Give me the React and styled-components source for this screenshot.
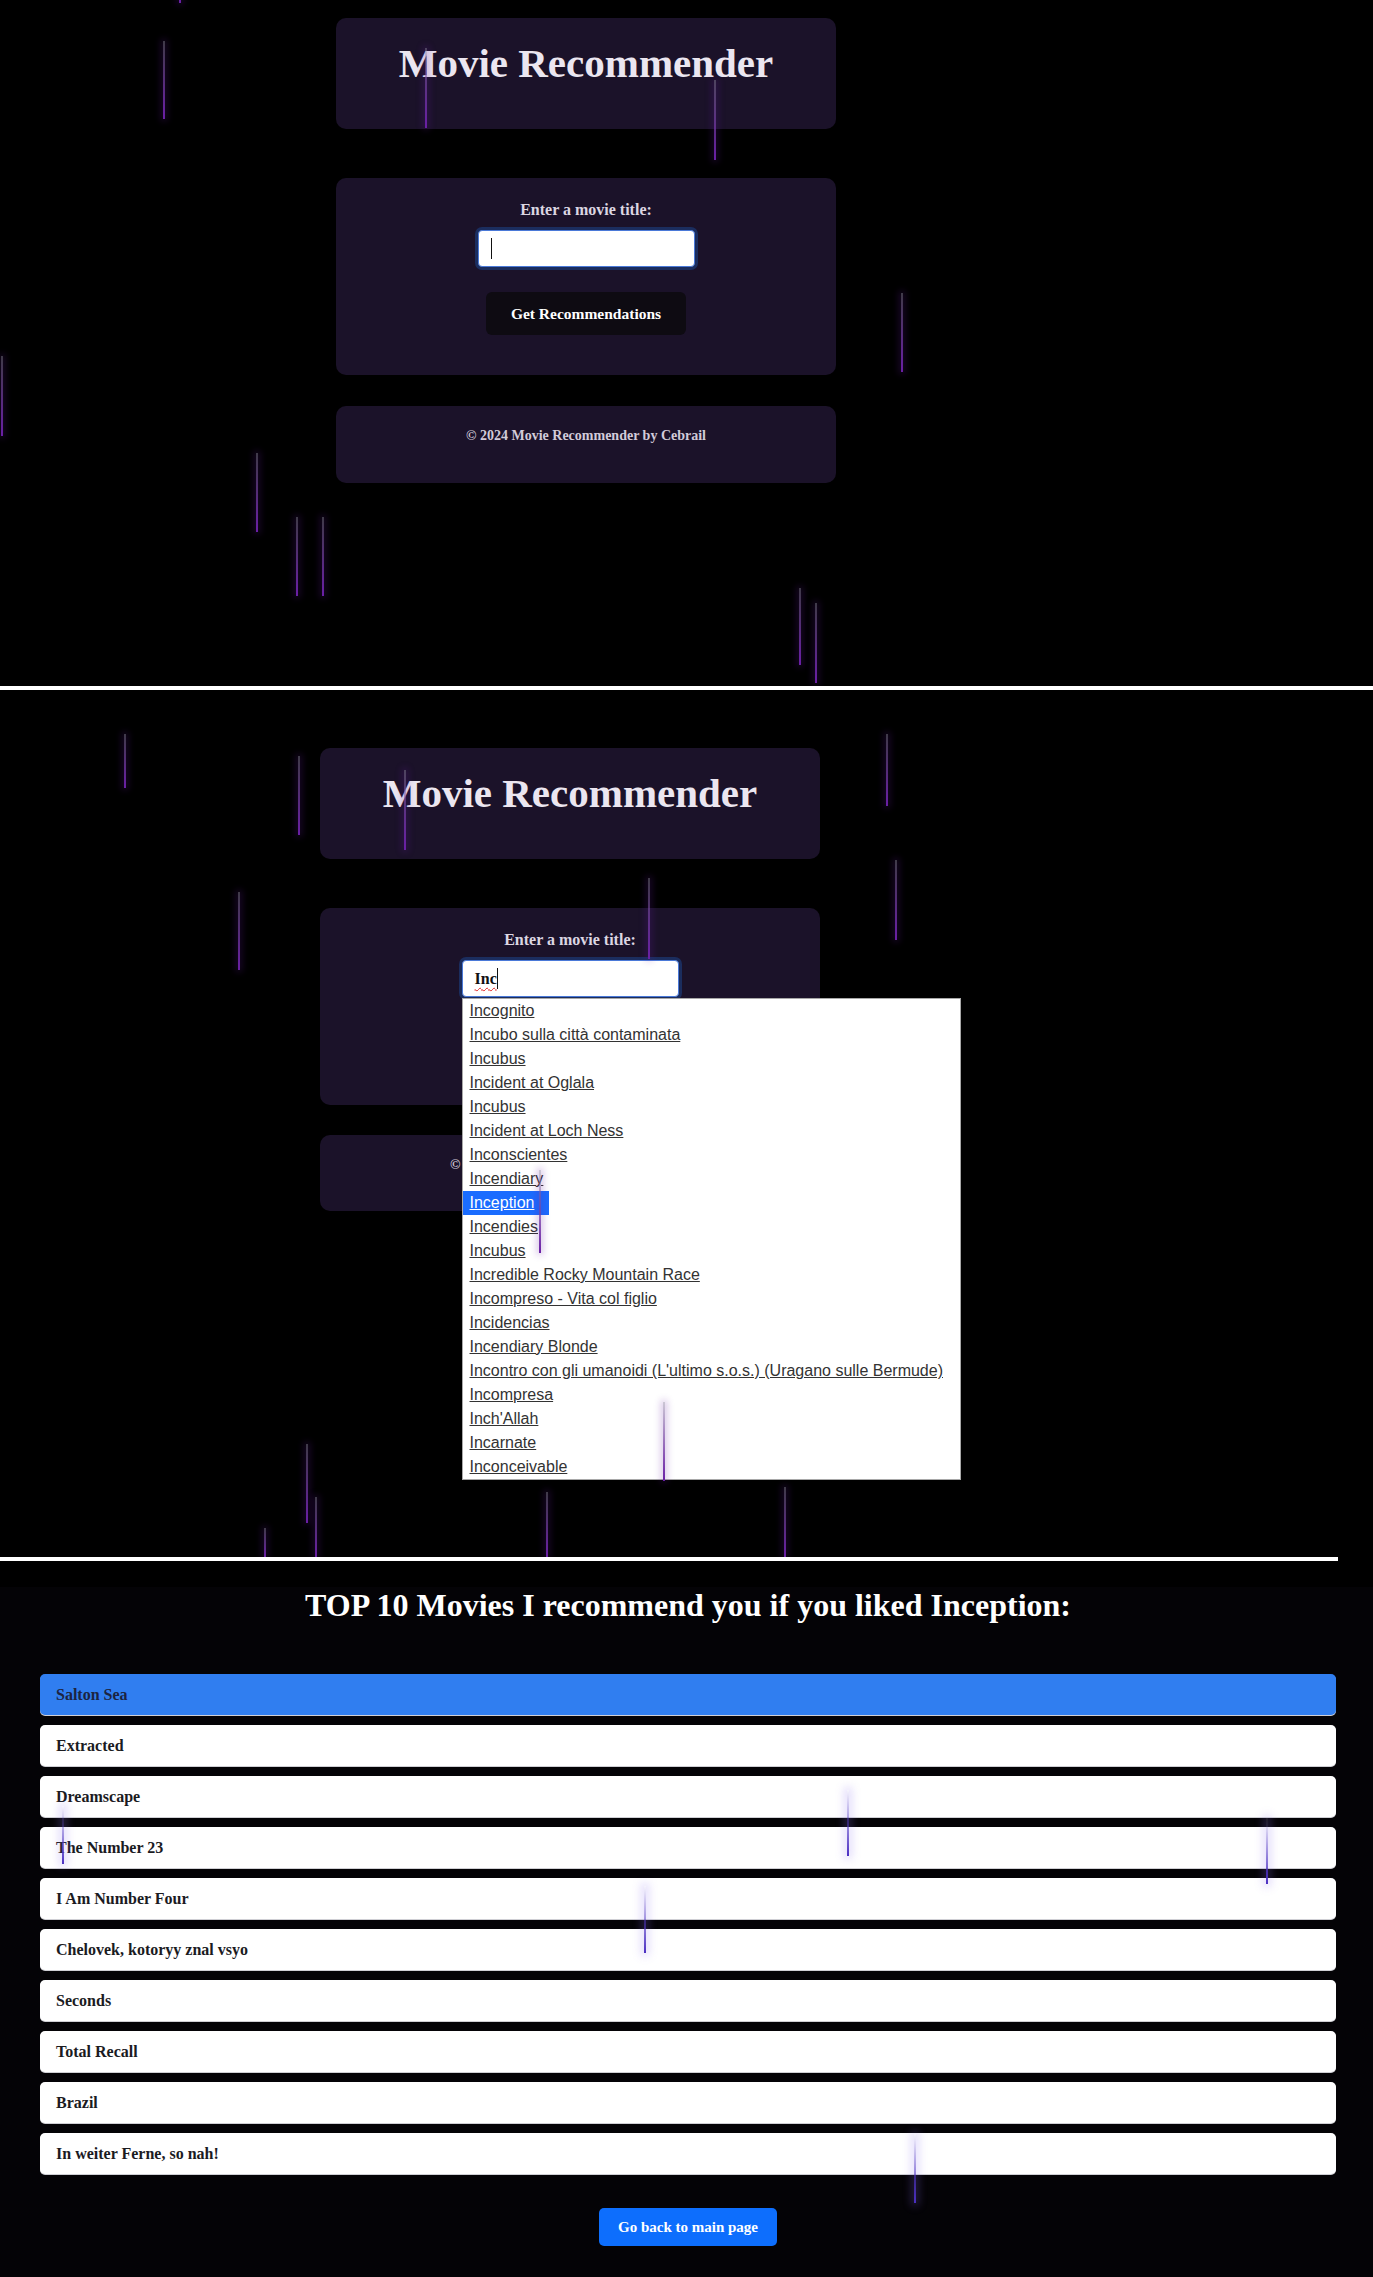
import React from "react";
import styled, { createGlobalStyle, css } from "styled-components";

const GlobalStyle = createGlobalStyle`
  html, body {
    margin: 0;
    padding: 0;
    background: #000000;
  }
`;

const suggestions = [
  "Incognito",
  "Incubo sulla città contaminata",
  "Incubus",
  "Incident at Oglala",
  "Incubus",
  "Incident at Loch Ness",
  "Inconscientes",
  "Incendiary",
  "Inception",
  "Incendies",
  "Incubus",
  "Incredible Rocky Mountain Race",
  "Incompreso - Vita col figlio",
  "Incidencias",
  "Incendiary Blonde",
  "Incontro con gli umanoidi (L'ultimo s.o.s.) (Uragano sulle Bermude)",
  "Incompresa",
  "Inch'Allah",
  "Incarnate",
  "Inconceivable",
];

const results = [
  "Salton Sea",
  "Extracted",
  "Dreamscape",
  "The Number 23",
  "I Am Number Four",
  "Chelovek, kotoryy znal vsyo",
  "Seconds",
  "Total Recall",
  "Brazil",
  "In weiter Ferne, so nah!",
];

// falling streaks: [x, top, bottom] relative to each shot
const rainHome = [
  [179, -40, 3],
  [163, 41, 119],
  [425, 48, 128],
  [714, 80, 160],
  [901, 293, 372],
  [1, 356, 436],
  [256, 453, 532],
  [296, 517, 596],
  [322, 517, 596],
  [799, 588, 665],
  [815, 603, 683],
];

const rainSearch = [
  [124, 44, 98],
  [298, 66, 145],
  [404, 80, 160],
  [648, 188, 269],
  [886, 44, 116],
  [895, 170, 250],
  [238, 202, 280],
  [539, 480, 563],
  [663, 712, 791],
  [306, 754, 833],
  [315, 807, 867],
  [264, 838, 867],
  [546, 802, 867],
  [784, 797, 867],
];

const rainResults = [
  [62, 245, 303],
  [847, 229, 295],
  [1266, 257, 323],
  [644, 325, 392],
  [914, 573, 642],
];

const Page = styled.div`
  width: 1373px;
  background: #000000;
  font-family: "Liberation Serif", "DejaVu Serif", serif;
`;

const Shot = styled.section`
  position: relative;
  height: ${(p) => p.$height}px;
  overflow: hidden;
`;

const Divider = styled.div`
  height: 4px;
  width: ${(p) => p.$width || 1373}px;
  background: #ffffff;
`;

const Streak = styled.span`
  position: absolute;
  z-index: 5;
  width: 2px;
  pointer-events: none;
  ${(p) =>
    p.$tone === "blue"
      ? css`
          background: linear-gradient(to bottom, rgba(190, 180, 240, 0.15), #4b2fc2);
          box-shadow: 0 0 8px 3px rgba(140, 110, 240, 0.25);
        `
      : css`
          background: linear-gradient(to bottom, rgba(140, 130, 160, 0.45), #6a1fa6);
          box-shadow: 0 0 7px 2px rgba(100, 30, 160, 0.28);
        `}
`;

const Viewport = styled.div`
  width: ${(p) => p.$width}px;
  padding-top: ${(p) => p.$top}px;
  display: flex;
  flex-direction: column;
  align-items: center;
`;

const Card = styled.div`
  width: 500px;
  box-sizing: border-box;
  background: #1b1229;
  border-radius: 10px;
  text-align: center;
`;

const HeaderCard = styled(Card)`
  height: 111px;
  padding-top: 22px;
`;

const Title = styled.h1`
  margin: 0;
  font-size: 41px;
  line-height: 47px;
  font-weight: 700;
  color: #ebe6f0;
`;

const FormCard = styled(Card)`
  margin-top: 49px;
  padding: 23px 0 40px;
  display: flex;
  flex-direction: column;
  align-items: center;
`;

const Label = styled.label`
  font-size: 16px;
  line-height: 18px;
  font-weight: 700;
  color: #dcd6e2;
  margin-bottom: 11px;
`;

const InputWrap = styled.div`
  position: relative;
`;

const InputBox = styled.div`
  width: 217px;
  height: 37px;
  box-sizing: border-box;
  background: #ffffff;
  border: 1px solid #4a79d8;
  border-radius: 4px;
  box-shadow: 0 0 0 3px #1b2d5e;
  padding-left: 12px;
  display: flex;
  align-items: center;
  font-size: 16px;
  font-weight: 700;
  color: #111111;
`;

const Typed = styled.span`
  text-decoration: underline wavy #e02020;
  text-decoration-thickness: 1px;
  text-underline-offset: 3px;
`;

const Caret = styled.span`
  width: 1px;
  height: 21px;
  background: #111111;
`;

const Dropdown = styled.div`
  position: absolute;
  z-index: 3;
  top: 100%;
  left: 0;
  width: 499px;
  box-sizing: border-box;
  margin-top: 1px;
  background: #ffffff;
  border: 1px solid #a8a8a8;
  text-align: left;
`;

const Option = styled.a`
  display: block;
  width: fit-content;
  height: 24px;
  line-height: 24px;
  padding: 0 15px 0 7px;
  font-family: "Liberation Sans", Arial, sans-serif;
  font-size: 16px;
  color: ${(p) => (p.$active ? "#ffffff" : "#333333")};
  background: ${(p) => (p.$active ? "#1a6cff" : "transparent")};
  text-decoration: underline;
  white-space: nowrap;
`;

const SubmitButton = styled.button`
  margin-top: 25px;
  width: 200px;
  height: 43px;
  border: none;
  border-radius: 6px;
  background: #0e0b12;
  color: #ffffff;
  font-family: inherit;
  font-size: 15.5px;
  font-weight: 700;
`;

const FooterCard = styled(Card)`
  margin-top: ${(p) => p.$gap}px;
  height: ${(p) => p.$height}px;
  padding-top: 22px;
  font-size: 14px;
  line-height: 16px;
  font-weight: 700;
  color: #d2cbd9;
`;

const Results = styled.div`
  margin-top: 26px;
  height: 690px;
  background: #040306;
  padding: 0 37px 0 40px;
  display: flex;
  flex-direction: column;
`;

const ResultsTitle = styled.h2`
  margin: 0;
  font-size: 32px;
  line-height: 37px;
  font-weight: 700;
  color: #ffffff;
  text-align: center;
`;

const ResultList = styled.ul`
  list-style: none;
  margin: 50px 0 0;
  padding: 0;
  display: flex;
  flex-direction: column;
  gap: 10px;
`;

const ResultItem = styled.li`
  height: 41px;
  box-sizing: border-box;
  padding-left: 16px;
  display: flex;
  align-items: center;
  border-radius: 5px;
  background: ${(p) => (p.$active ? "#307ef0" : "#ffffff")};
  box-shadow: 0 1px 0 #cfcfd4;
  font-size: 16px;
  font-weight: 700;
  color: ${(p) => (p.$active ? "#1c2440" : "#1b1b1f")};
`;

const BackButton = styled.button`
  align-self: center;
  margin-top: 34px;
  width: 178px;
  height: 38px;
  border: none;
  border-radius: 5px;
  background: #0d6efd;
  color: #ffffff;
  font-family: inherit;
  font-size: 15px;
  font-weight: 700;
`;

const Rain = ({ drops, tone }) =>
  drops.map(([x, top, bottom], i) => (
    <Streak
      key={i}
      $tone={tone}
      style={{ left: x, top, height: bottom - top }}
    />
  ));

const App = () => {
  return (
    <Page>
      <GlobalStyle />

      <Shot $height={686}>
        <Rain drops={rainHome} />
        <Viewport $width={1172} $top={18}>
          <HeaderCard>
            <Title>Movie Recommender</Title>
          </HeaderCard>
          <FormCard>
            <Label>Enter a movie title:</Label>
            <InputWrap>
              <InputBox>
                <Caret />
              </InputBox>
            </InputWrap>
            <SubmitButton>Get Recommendations</SubmitButton>
          </FormCard>
          <FooterCard $gap={31} $height={77}>
            © 2024 Movie Recommender by Cebrail
          </FooterCard>
        </Viewport>
      </Shot>

      <Divider />

      <Shot $height={867}>
        <Rain drops={rainSearch} />
        <Viewport $width={1140} $top={58}>
          <HeaderCard>
            <Title>Movie Recommender</Title>
          </HeaderCard>
          <FormCard>
            <Label>Enter a movie title:</Label>
            <InputWrap>
              <InputBox>
                <Typed>Inc</Typed>
                <Caret />
              </InputBox>
              <Dropdown>
                {suggestions.map((s, i) => (
                  <Option key={i} $active={s === "Inception"}>
                    {s}
                  </Option>
                ))}
              </Dropdown>
            </InputWrap>
            <SubmitButton>Get Recommendations</SubmitButton>
          </FormCard>
          <FooterCard $gap={30} $height={76}>
            © 2024 Movie Recommender by Cebrail
          </FooterCard>
        </Viewport>
      </Shot>

      <Divider $width={1338} />

      <Shot $height={716}>
        <Rain drops={rainResults} tone="blue" />
        <Results>
          <ResultsTitle>
            TOP 10 Movies I recommend you if you liked Inception:
          </ResultsTitle>
          <ResultList>
            {results.map((r, i) => (
              <ResultItem key={i} $active={i === 0}>
                {r}
              </ResultItem>
            ))}
          </ResultList>
          <BackButton>Go back to main page</BackButton>
        </Results>
      </Shot>
    </Page>
  );
};

export default App;
